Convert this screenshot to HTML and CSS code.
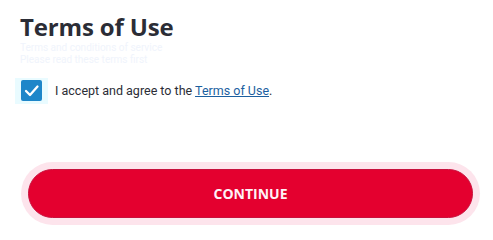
FILE: index.html
```html
<!DOCTYPE html>
<html>
<head>
<meta charset="utf-8">
<link rel="stylesheet" href="styles.css">
</head>
<body>
<main class="page">
  <h1 class="title">Terms of Use</h1>
  <div class="terms-box">
    <p>Terms and conditions of service</p>
    <p>Please read these terms first</p>
  </div>
  <label class="agree">
    <span class="check-wrap">
      <span class="check">
        <svg viewBox="0 0 21 21" width="21" height="21"><path d="M5 11 L9 15 L16.5 6.5" fill="none" stroke="#fff" stroke-width="2.3" stroke-linecap="round" stroke-linejoin="round"/></svg>
      </span>
    </span>
    <span class="agree-text">I accept and agree to the <a href="#" class="link">Terms of Use</a>.</span>
  </label>
  <div class="actions">
    <button class="btn">CONTINUE</button>
  </div>
</main>
</body>
</html>
```
FILE: styles.css
```css
html, body {
  margin: 0;
  padding: 0;
  background: #fff;
}
.page {
  font-family: Roboto, "Open Sans", sans-serif;
  padding: 12px 0 0 20px;
}
.title {
  margin: 0;
  font-family: "Open Sans", "Noto Sans", sans-serif;
  font-size: 24px;
  font-weight: 700;
  letter-spacing: -0.15px;
  color: #2b2d36;
  line-height: 30px;
}
.terms-box {
  height: 24px;
  width: 155px;
  overflow: hidden;
}
.terms-box p {
  margin: 0;
  font-size: 10px;
  line-height: 12px;
  color: #f0f4fc;
  white-space: nowrap;
}
.agree {
  display: flex;
  align-items: center;
  margin-top: 12px;
  gap: 7px;
}
.check-wrap {
  display: flex;
  margin-left: -5px;
  padding: 2px 6px 3px 6px;
  background: #e9fbff;
}
.check {
  display: flex;
  width: 21px;
  height: 21px;
  background: #1e86c9;
  border-radius: 2px;
}
.agree-text {
  font-size: 12.5px;
  line-height: 18px;
  color: #2b2d36;
}
.link {
  color: #1c5f9f;
  text-decoration: underline;
}
.actions {
  margin-top: 58px;
  margin-left: 1px;
  width: 459px;
  box-sizing: border-box;
  padding: 7px;
  background: #fde4ec;
  border-radius: 32px;
}
.btn {
  display: block;
  width: 100%;
  height: 49px;
  border: 1px solid #c8113d;
  border-radius: 25px;
  background: #e4002f;
  color: #fff2f6;
  font-family: "Open Sans", "Noto Sans", sans-serif;
  font-weight: 700;
  font-size: 14px;
}
```
